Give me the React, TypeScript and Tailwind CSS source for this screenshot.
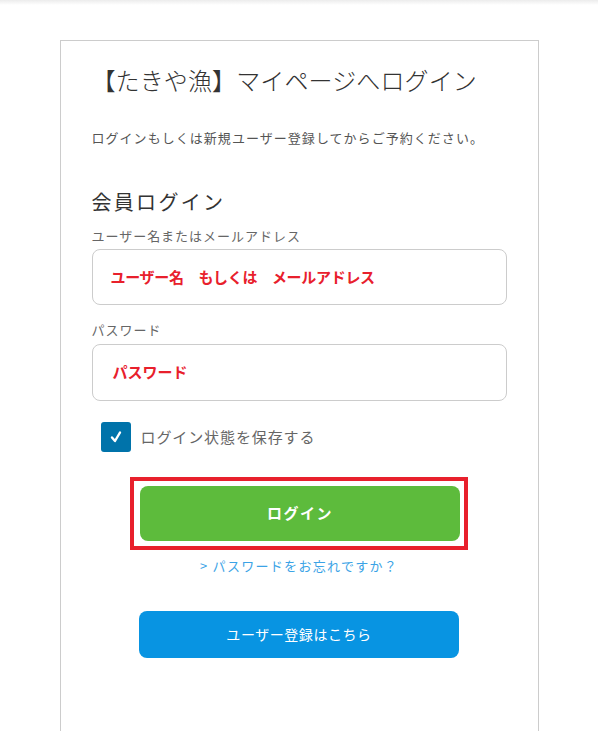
import React from 'react';

const App = () => {
  return (
    <div
      className="min-h-screen bg-white overflow-hidden"
      style={{ fontFamily: '"Noto Sans CJK JP", "Noto Sans", sans-serif' }}
    >
      {/* top shadow */}
      <div className="h-[5px] bg-gradient-to-b from-[#ececec] to-white" />

      <div className="mt-[35px] mx-auto w-[479px] min-h-[720px] border border-[#cccccc] px-[31px] pt-[21px]">
        <h1 className="text-[24px] leading-[36px] text-[#333333] font-light tracking-[0.005em]">
          【たきや漁】マイページへログイン
        </h1>

        <p className="mt-[30px] text-[13px] leading-[20px] text-[#555555] tracking-[0.08em]">
          ログインもしくは新規ユーザー登録してからご予約ください。
        </p>

        <h2 className="mt-[39px] text-[20px] leading-[30px] text-[#333333] tracking-[0.115em]">
          会員ログイン
        </h2>

        <label className="block mt-[9px] text-[13px] leading-[20px] text-[#666666] tracking-[0.075em]">
          ユーザー名またはメールアドレス
        </label>
        <div className="mt-[3px] h-[56px] rounded-[8px] border border-[#cccccc] flex items-center pl-[18px]">
          <span className="text-[15px] font-bold text-[#e8202c] tracking-[-0.02em]">
            ユーザー名　もしくは　メールアドレス
          </span>
        </div>

        <label className="block mt-[15px] text-[13px] leading-[20px] text-[#666666] tracking-[0.075em]">
          パスワード
        </label>
        <div className="mt-[4px] h-[57px] rounded-[8px] border border-[#cccccc] flex items-center pl-[20px]">
          <span className="text-[15px] font-bold text-[#e8202c]">パスワード</span>
        </div>

        <div className="mt-[21px] ml-[9px] flex items-center gap-[10px]">
          <div className="w-[30px] h-[30px] rounded-[3px] bg-[#0073aa] flex items-center justify-center">
            <svg width="14" height="14" viewBox="0 0 14 14">
              <path
                d="M3 7.5 L6 11 L11 2.5"
                fill="none"
                stroke="white"
                strokeWidth="2.4"
                strokeLinecap="round"
                strokeLinejoin="round"
              />
            </svg>
          </div>
          <span className="text-[15px] text-[#666666] tracking-[0.06em]">ログイン状態を保存する</span>
        </div>

        <div className="mt-[25px] flex justify-center">
          <div className="border-4 border-[#e8202c] pt-[5px] pb-[5px] pl-[6px] pr-[4px]">
            <button className="w-[320px] h-[55px] rounded-[8px] bg-[#5dbb3c] text-white text-[15px] font-bold tracking-[0.1em]">
              ログイン
            </button>
          </div>
        </div>

        <div className="mt-[6px] text-center text-[13px] leading-[20px] text-[#3ba3e6] tracking-[0.1em]">
          &gt; パスワードをお忘れですか？
        </div>

        <div className="mt-[35px] flex justify-center">
          <button className="w-[320px] h-[47px] rounded-[8px] bg-[#0894e2] text-white text-[14px] tracking-[0.04em]">
            ユーザー登録はこちら
          </button>
        </div>
      </div>
    </div>
  );
};

export default App;
